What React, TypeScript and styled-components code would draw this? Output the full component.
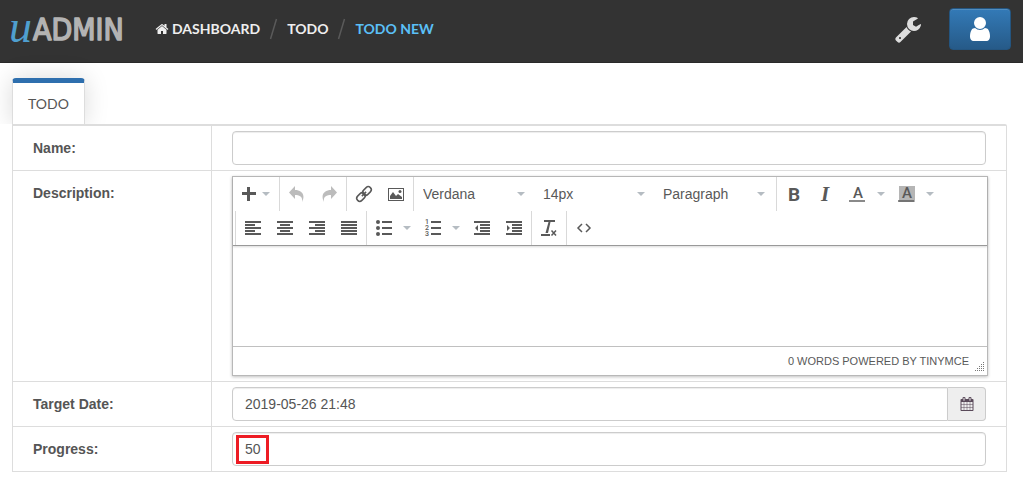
import React from 'react';
import styled, { createGlobalStyle } from 'styled-components';

const GlobalStyle = createGlobalStyle`
  *, *::before, *::after { box-sizing: border-box; }
  body {
    margin: 0;
    background: #fff;
    color: #555;
    font-family: "Liberation Sans", Arial, sans-serif;
    font-size: 14px;
    line-height: 20px;
  }
  button, input, select, textarea { font: inherit; color: inherit; }
  svg { overflow: visible; }
`;

const NavBar = styled.header`
  display: flex;
  align-items: center;
  height: 63px;
  padding: 0 12px 5px 8px;
  background: #333;
  border-bottom: 1px solid #2a2a2a;
`;

const Brand = styled.a`
  display: flex;
  width: 120px;
  margin-right: 27px;
`;

const Crumbs = styled.nav`
  display: flex;
  flex: 1;
  align-items: center;
  gap: 9px;
  font-family: Lato, sans-serif;
  font-size: 14px;
  font-weight: 700;
`;

const Crumb = styled.a<{ $current?: boolean }>`
  display: flex;
  align-items: center;
  gap: 3px;
  color: ${(p) => (p.$current ? '#5bc0f8' : '#eee')};
  text-decoration: none;
  white-space: nowrap;
`;

const ToolsButton = styled.button`
  display: flex;
  margin-right: 27px;
  padding: 0;
  border: 0;
  background: none;
  color: #ddd;
`;

const UserButton = styled.button`
  display: flex;
  align-items: center;
  justify-content: center;
  width: 62px;
  height: 42px;
  padding: 0;
  border: 1px solid #245580;
  border-radius: 4px;
  background: linear-gradient(#337ab7, #265a88);
  box-shadow: inset 0 1px 0 rgba(255, 255, 255, 0.15);
  color: #fff;
`;

const Main = styled.main`
  padding: 15px 16px 11px 12px;
`;

const Tabs = styled.div`
  display: flex;
`;

const Tab = styled.button`
  height: 46px;
  padding: 1px 15px 0;
  border: 1px solid #ddd;
  border-top: 5px solid #2e6fae;
  border-bottom: 0;
  border-radius: 4px 4px 0 0;
  background: #fff;
  box-shadow: 0 0 24px rgba(0, 0, 0, 0.15);
  clip-path: inset(-24px -40px 0 -24px);
  font-family: Lato, sans-serif;
  font-size: 14px;
`;

const FormTable = styled.table`
  width: 100%;
  border: 1px solid #ddd;
  border-top-width: 2px;
  border-collapse: separate;
  border-spacing: 0;
  border-radius: 0 2px 0 0;
  table-layout: fixed;

  tr + tr > * { border-top: 1px solid #ddd; }
`;

const LabelCell = styled.th`
  width: 199px;
  padding: 12px 8px 12px 20px;
  border-right: 1px solid #ddd;
  font-weight: 700;
  text-align: left;
  vertical-align: top;
`;

const FieldCell = styled.td`
  padding: 5px 20px;
`;

const Field = styled.div`
  position: relative;
  display: flex;
`;

const TextInput = styled.input<{ $joined?: boolean }>`
  flex: 1;
  min-width: 0;
  height: 34px;
  padding: 6px 12px;
  border: 1px solid #ccc;
  border-radius: ${(p) => (p.$joined ? '4px 0 0 4px' : '4px')};
  background: #fff;
  box-shadow: inset 0 1px 1px rgba(0, 0, 0, 0.075);
  outline: 0;
`;

const CalendarButton = styled.button`
  display: flex;
  align-items: center;
  justify-content: center;
  width: 38px;
  padding: 0;
  border: 1px solid #ccc;
  border-left: 0;
  border-radius: 0 4px 4px 0;
  background: #eee;
  color: #5a4a5a;
`;

const Highlight = styled.span`
  position: absolute;
  top: 3px;
  left: 4px;
  width: 33px;
  height: 29px;
  border: 3px solid #ed1c24;
  pointer-events: none;
`;

const Editor = styled.div`
  margin-right: -2px;
  border: 1px solid #b8b8b8;
  box-shadow: 0 1px 3px rgba(0, 0, 0, 0.25);
  color: #595959;
`;

const Toolbar = styled.div`
  border-bottom: 1px solid #999;
  box-shadow: 0 1px 2px rgba(0, 0, 0, 0.15);
`;

const ToolbarRow = styled.div<{ $indent?: boolean }>`
  display: flex;
  padding-left: ${(p) => (p.$indent ? '2px' : '0')};
`;

const Group = styled.div<{ $first?: boolean }>`
  display: flex;
  height: 34px;
  padding: ${(p) => (p.$first ? '0 3px 0 0' : '0 1px')};
  border-left: ${(p) => (p.$first ? '0' : '1px solid #d9d9d9')};
`;

const ToolButton = styled.button<{ $split?: boolean }>`
  display: flex;
  flex: none;
  align-items: center;
  gap: ${(p) => (p.$split ? '11px' : '5px')};
  padding: 0 6px 0 8px;
  min-width: 32px;
  border: 0;
  background: none;

  &:disabled { opacity: 0.4; color: inherit; }
`;

const ListBox = styled.span`
  display: flex;
  align-items: center;
  width: 120px;
  padding: 0 10px 0 8px;
`;

const ToolSelect = styled.select`
  flex: 1;
  min-width: 0;
  padding: 0;
  border: 0;
  appearance: none;
  background: none;
  outline: 0;
`;

const Caret = styled.span`
  flex: none;
  border: 4px solid transparent;
  border-top-color: #b5bcc2;
  border-bottom: 0;
`;

const EditArea = styled.textarea`
  display: block;
  width: 100%;
  height: 100px;
  padding: 8px;
  border: 0;
  background: none;
  outline: 0;
  resize: none;
`;

const StatusBar = styled.div`
  display: flex;
  align-items: flex-end;
  justify-content: flex-end;
  gap: 6px;
  height: 29px;
  padding: 0 2px 3px;
  border-top: 1px solid #c0c0c0;
  font-size: 11px;
  line-height: 22px;
`;

const SolidIcon = ({ size, d }: { size: number; d: string }) => (
  <svg width={size} height={size} viewBox="0 0 1792 1792" fill="currentColor" aria-hidden="true">
    <path d={d} />
  </svg>
);

const HOME =
  'M1472 992v480q0 26-19 45t-45 19h-384v-384h-256v384h-384q-26 0-45-19t-19-45v-480q0-1 .5-3t.5-3l575-474 575 474q1 2 1 6zm223-69l-62 74q-8 9-21 11h-3q-13 0-21-7l-692-577-692 577q-12 8-24 7-13-2-21-11l-62-74q-8-10-7-23.500t11-21.500l719-599q32-26 76-26t76 26l244 204v-195q0-14 9-23t23-9h192q14 0 23 9t9 23v408l219 182q10 8 11 21.500t-7 23.500z';
const WRENCH =
  'M448 1472q0-26-19-45t-45-19-45 19-19 45 19 45 45 19 45-19 19-45zm644-420l-682 682q-37 37-90 37-52 0-91-37l-106-108q-38-36-38-90 0-53 38-91l681-681q39 98 114.500 173.500t173.500 114.500zm634-435q0 39-23 106-47 134-164.500 217.500t-258.500 83.500q-185 0-316.500-131.500t-131.500-316.500 131.500-316.500 316.500-131.500q58 0 121.500 16.500t107.500 46.500q16 11 16 28t-16 28l-293 169v224l193 107q5-3 79-48.500t135.500-81 70.500-35.500q15 0 23.500 10t8.500 25z';
const USER =
  'M1536 1399q0 109-62.500 187t-150.500 78h-854q-88 0-150.500-78t-62.500-187q0-85 8.500-160.500t31.500-152 58.500-131 94-89 134.500-34.500q131 128 313 128t313-128q76 0 134.500 34.500t94 89 58.500 131 31.500 152 8.500 160.500zm-256-887q0 159-112.500 271.500t-271.500 112.500-271.500-112.500-112.500-271.500 112.500-271.500 271.500-112.500 271.500 112.500 112.500 271.500z';
const CALENDAR =
  'M192 1664h288v-288h-288v288zm352 0h320v-288h-320v288zm-352-352h288v-320h-288v320zm352 0h320v-320h-320v320zm-352-384h288v-288h-288v288zm736 736h320v-288h-320v288zm-384-736h320v-288h-320v288zm768 736h288v-288h-288v288zm-384-352h320v-320h-320v320zm-352-864v-288q0-13-9.500-22.500t-22.500-9.500h-64q-13 0-22.500 9.500t-9.500 22.500v288q0 13 9.500 22.500t22.500 9.500h64q13 0 22.500-9.500t9.500-22.500zm736 864h288v-320h-288v320zm-384-384h320v-288h-320v288zm384 0h288v-288h-288v288zm32-480v-288q0-13-9.500-22.500t-22.500-9.500h-64q-13 0-22.500 9.500t-9.500 22.500v288q0 13 9.500 22.500t22.500 9.500h64q13 0 22.500-9.500t9.500-22.500zm384-64v1280q0 52-38 90t-90 38h-1408q-52 0-90-38t-38-90v-1280q0-52 38-90t90-38h128v-96q0-66 47-113t113-47h64q66 0 113 47t47 113v96h384v-96q0-66 47-113t113-47h64q66 0 113 47t47 113v96h128q52 0 90 38t38 90z';

const Logo = () => (
  <svg width="120" height="46" viewBox="0 0 120 46" role="img" aria-label="uAdmin">
    <text x="1" y="36" fill="#4f9fcf" fontFamily="Liberation Serif, serif" fontStyle="italic" fontSize="46">u</text>
    <text x="25" y="34" fill="#b3b3b3" stroke="#b3b3b3" strokeWidth="1.500" strokeLinejoin="round" fontFamily="DejaVu Sans Condensed, DejaVu Sans, sans-serif" fontSize="30">ADMIN</text>
  </svg>
);

const Slash = () => (
  <svg width="9" height="22" viewBox="0 0 9 22" aria-hidden="true">
    <path d="M1.500 21L7.500 1" stroke="#5a5a5a" strokeWidth="1.500" />
  </svg>
);

const Glyph = ({ children }: { children: React.ReactNode }) => (
  <svg width="16" height="16" viewBox="0 0 16 16" fill="currentColor" aria-hidden="true">
    {children}
  </svg>
);

const alignIcons: Record<string, string> = {
  'Align left': 'M0 1h16v2H0zM0 4h10v2H0zM0 7h16v2H0zM0 10h10v2H0zM0 13h16v2H0z',
  'Align center': 'M0 1h16v2H0zM3 4h10v2H3zM0 7h16v2H0zM3 10h10v2H3zM0 13h16v2H0z',
  'Align right': 'M0 1h16v2H0zM6 4h10v2H6zM0 7h16v2H0zM6 10h10v2H6zM0 13h16v2H0z',
  Justify: 'M0 1h16v2H0zM0 4h16v2H0zM0 7h16v2H0zM0 10h16v2H0zM0 13h16v2H0z',
};

const Tool = ({ label, split, menu, disabled, children }: {
  label: string; split?: boolean; menu?: boolean; disabled?: boolean; children: React.ReactNode;
}) => (
  <ToolButton type="button" aria-label={label} $split={split} disabled={disabled}>
    <Glyph>{children}</Glyph>
    {(split || menu) && <Caret />}
  </ToolButton>
);

const ToolList = ({ label, value }: { label: string; value: string }) => (
  <ListBox>
    <ToolSelect aria-label={label} defaultValue={value}>
      <option>{value}</option>
    </ToolSelect>
    <Caret />
  </ListBox>
);

const FONT = 'Roboto, sans-serif';

const ResizeGrip = () => (
  <svg width="10" height="10" viewBox="0 0 10 10" fill="#777" aria-hidden="true">
    <path d="M8 0h1v1H8zM6 2h1v1H6zM8 2h1v1H8zM4 4h1v1H4zM6 4h1v1H6zM8 4h1v1H8zM2 6h1v1H2zM4 6h1v1H4zM6 6h1v1H6zM8 6h1v1H8zM0 8h1v1H0zM2 8h1v1H2zM4 8h1v1H4zM6 8h1v1H6zM8 8h1v1H8z" />
  </svg>
);

const RichText = () => (
  <Editor>
    <Toolbar role="toolbar">
      <ToolbarRow>
        <Group $first>
          <Tool label="Insert" menu><path d="M6 1h3v5h6v3H9v6H6V9H1V6h5z" /></Tool>
        </Group>
        <Group>
          <Tool label="Undo" disabled><path d="M6 0v4c6 0 11 4 7 12 1-5-2-7-7-7v4L0 6.500z" /></Tool>
          <Tool label="Redo" disabled><path d="M10 0v4C4 4-1 8 3 16 2 11 5 9 10 9v4l6-6.500z" /></Tool>
        </Group>
        <Group>
          <Tool label="Link">
            <g fill="none" stroke="currentColor" strokeWidth="1.500" transform="rotate(-45 8 8)">
              <rect x="-1" y="5" width="9.500" height="6" rx="3" />
              <rect x="7.500" y="5" width="9.500" height="6" rx="3" />
              <path d="M5 8h6" />
            </g>
          </Tool>
          <Tool label="Image">
            <path fillRule="evenodd" d="M0 2h16v13H0zM1 3v11h14V3z" />
            <path d="M2 13v-3l3-4 3 4 2-2 4 3v2z" />
            <circle cx="12" cy="5.500" r="1.500" />
          </Tool>
        </Group>
        <Group>
          <ToolList label="Font family" value="Verdana" />
          <ToolList label="Font size" value="14px" />
          <ToolList label="Block format" value="Paragraph" />
        </Group>
        <Group>
          <Tool label="Bold"><text x="2" y="15" fontFamily={FONT} fontWeight="700" fontSize="19">B</text></Tool>
          <Tool label="Italic"><text x="3" y="15" fontFamily="Liberation Serif, serif" fontStyle="italic" fontWeight="700" fontSize="21">I</text></Tool>
          <Tool label="Text color" split>
            <text x="3" y="12" fontFamily={FONT} fontWeight="500" fontSize="15">A</text>
            <path d="M-1 14h16v2H-1z" opacity=".7" />
          </Tool>
          <Tool label="Background color" split>
            <path d="M0 0h16v16H0z" fill="#b5b5b5" />
            <text x="3" y="12" fontFamily={FONT} fontWeight="500" fontSize="15">A</text>
            <path d="M-1 14h16v2H-1z" opacity=".7" />
          </Tool>
        </Group>
      </ToolbarRow>
      <ToolbarRow $indent>
        <Group>
          {Object.entries(alignIcons).map(([label, d]) => (
            <Tool key={label} label={label}><path d={d} /></Tool>
          ))}
        </Group>
        <Group>
          <Tool label="Bullet list" split>
            <path d="M6 1h10v2H6zM6 7h10v2H6zM6 13h10v2H6z" />
            <circle cx="2" cy="2" r="2" /><circle cx="2" cy="8" r="2" /><circle cx="2" cy="14" r="2" />
          </Tool>
          <Tool label="Numbered list" split>
            <path d="M6 1h10v2H6zM6 7h10v2H6zM6 13h10v2H6z" />
            <g fontFamily={FONT} fontSize="7" fontWeight="500">
              <text x="0" y="4">1</text><text x="0" y="10">2</text><text x="0" y="16">3</text>
            </g>
          </Tool>
          <Tool label="Outdent"><path d="M0 1h16v2H0zM6 4h10v2H6zM6 7h10v2H6zM6 10h10v2H6zM0 13h16v2H0zM4 5v6L1 8z" /></Tool>
          <Tool label="Indent"><path d="M0 1h16v2H0zM6 4h10v2H6zM6 7h10v2H6zM6 10h10v2H6zM0 13h16v2H0zM1 5v6l3-3z" /></Tool>
        </Group>
        <Group>
          <Tool label="Clear formatting">
            <path d="M3 0h11v2h-4.500L7 13H4.500L7.500 2H3zM0 14h9v2H0z" />
            <path d="M10.500 10.500l4.500 5M15 10.500L10.500 15.500" stroke="currentColor" strokeWidth="1.500" />
          </Tool>
        </Group>
        <Group>
          <Tool label="Source code"><path d="M6 4L2 8l4 4M10 4l4 4-4 4" fill="none" stroke="currentColor" strokeWidth="1.500" /></Tool>
        </Group>
      </ToolbarRow>
    </Toolbar>
    <EditArea id="description" />
    <StatusBar>
      <span>0 WORDS POWERED BY TINYMCE</span>
      <ResizeGrip />
    </StatusBar>
  </Editor>
);

export default function App() {
  return (
    <>
      <GlobalStyle />
      <NavBar>
        <Brand href="#"><Logo /></Brand>
        <Crumbs aria-label="Breadcrumb">
          <Crumb href="#"><SolidIcon size={14} d={HOME} />DASHBOARD</Crumb>
          <Slash />
          <Crumb href="#">TODO</Crumb>
          <Slash />
          <Crumb href="#" $current>TODO NEW</Crumb>
        </Crumbs>
        <ToolsButton type="button" aria-label="Settings"><SolidIcon size={28} d={WRENCH} /></ToolsButton>
        <UserButton type="button" aria-label="Account"><SolidIcon size={28} d={USER} /></UserButton>
      </NavBar>
      <Main>
        <Tabs><Tab type="button">TODO</Tab></Tabs>
        <FormTable>
          <tbody>
            <tr>
              <LabelCell scope="row"><label htmlFor="name">Name:</label></LabelCell>
              <FieldCell><Field><TextInput id="name" type="text" /></Field></FieldCell>
            </tr>
            <tr>
              <LabelCell scope="row"><label htmlFor="description">Description:</label></LabelCell>
              <FieldCell><RichText /></FieldCell>
            </tr>
            <tr>
              <LabelCell scope="row"><label htmlFor="target-date">Target Date:</label></LabelCell>
              <FieldCell>
                <Field>
                  <TextInput id="target-date" type="text" defaultValue="2019-05-26 21:48" $joined />
                  <CalendarButton type="button" aria-label="Pick a date"><SolidIcon size={14} d={CALENDAR} /></CalendarButton>
                </Field>
              </FieldCell>
            </tr>
            <tr>
              <LabelCell scope="row"><label htmlFor="progress">Progress:</label></LabelCell>
              <FieldCell>
                <Field>
                  <TextInput id="progress" type="text" defaultValue="50" />
                  <Highlight />
                </Field>
              </FieldCell>
            </tr>
          </tbody>
        </FormTable>
      </Main>
    </>
  );
}
